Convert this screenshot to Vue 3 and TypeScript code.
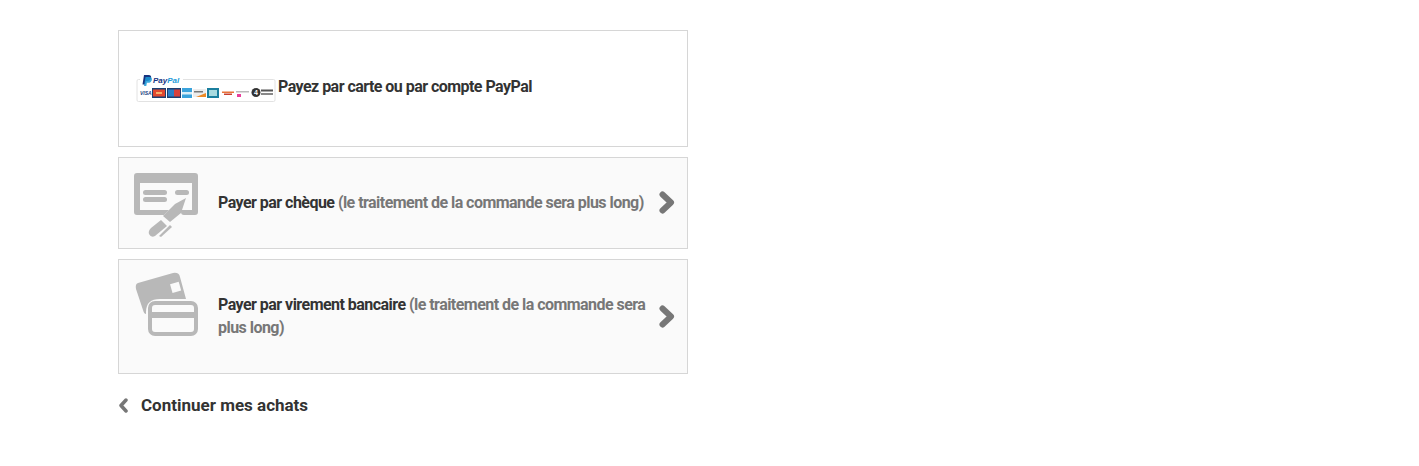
<script setup lang="ts">
const options = [
  { id: 'cheque', title: 'Payer par chèque', note: '(le traitement de la commande sera plus long)' },
  { id: 'virement', title: 'Payer par virement bancaire', note: '(le traitement de la commande sera plus long)' }
]
</script>

<template>
  <div class="payment">
    <a class="option paypal">
      <svg class="paypal-logo" width="140" height="30" viewBox="0 0 140 30">
        <path d="M4 5.500H2.500Q1 5.500 1 7V26Q1 27.500 2.500 27.500H137.500Q139 27.500 139 26V7Q139 5.500 137.500 5.500H47" fill="#fff" stroke="#e2e2e2" />
        <path d="M8 1h4.500c2.500 0 3 1.700 2.500 3.300-.5 1.800-2 2.700-3.800 2.700h-1.400l-.7 3.500H6.500z" fill="#17337f" />
        <path d="M9.500 3h4c2.200 0 2.800 1.500 2.300 3.200-.5 1.700-2 2.600-3.700 2.600h-1.200l-.6 3.200H8z" fill="#1c9bd8" opacity=".85" />
        <text x="17" y="9" class="pp-text">Pay<tspan fill="#1c9bd8">Pal</tspan></text>
        <text x="4" y="21" class="visa">VISA</text>
        <rect x="16" y="14" width="14" height="10" fill="#1c3f72" />
        <rect x="17" y="15.500" width="12" height="7" fill="#e2492f" />
        <rect x="20" y="18" width="6" height="2" fill="#f5b06a" />
        <rect x="31" y="14" width="14" height="10" fill="#1c3f72" />
        <rect x="32" y="15.500" width="6" height="7" fill="#2b7fc7" />
        <rect x="38" y="15.500" width="6" height="7" fill="#d9403a" />
        <rect x="46" y="14" width="10" height="10" fill="#3aa3dc" />
        <rect x="46" y="18" width="10" height="2.500" fill="#d7edf8" />
        <rect x="57" y="15" width="13" height="8" fill="#ececec" />
        <rect x="58" y="17" width="9" height="1.500" fill="#777" />
        <path d="M60 23 70 19V23z" fill="#ef8a25" />
        <rect x="71" y="14" width="12" height="10" fill="#1b7f9e" />
        <rect x="73" y="16" width="8" height="6" fill="#a9dbe0" />
        <rect x="86" y="17.500" width="12" height="1.500" fill="#e8743b" />
        <rect x="88" y="19.500" width="8" height="1.500" fill="#c9402f" />
        <rect x="100" y="17" width="13" height="1.500" fill="#bbb" />
        <rect x="101" y="20" width="4" height="3" fill="#e83e9b" />
        <circle cx="120" cy="18.500" r="4.500" fill="#333" />
        <text x="120" y="21" class="four">4</text>
        <rect x="125" y="15.500" width="12" height="2" fill="#555" />
        <rect x="125" y="19" width="12" height="2" fill="#888" />
      </svg>
      <span class="title">Payez par carte ou par compte PayPal</span>
    </a>

    <a v-for="o in options" :key="o.id" class="option alt" :class="o.id">
      <svg v-if="o.id === 'cheque'" class="icon" width="66" height="68" viewBox="0 0 66 68">
        <path d="M3 3h58a3 3 0 0 1 3 3v36a3 3 0 0 1-3 3H50q-3 0-3-3v-2h11V13H6v27h29l-5 5H3a3 3 0 0 1-3-3V6a3 3 0 0 1 3-3z" fill="#b8b8b8" />
        <rect x="9" y="20" width="24" height="5" rx="2.500" fill="#b8b8b8" />
        <rect x="9" y="27" width="24" height="5" rx="2.500" fill="#b8b8b8" />
        <rect x="41" y="20" width="14" height="5" rx="2.500" fill="#b8b8b8" />
        <path d="M52 28 47 43 36 52 29 46 41 34z" fill="#b8b8b8" />
        <path d="M27 50 33 56 21 66Q17 68 15 64 14 61 17 58z" fill="#b8b8b8" />
        <path d="M36 55 38 57 27 67 25 66z" fill="#b8b8b8" />
      </svg>
      <svg v-else class="icon" width="66" height="66" viewBox="0 0 66 66">
        <path d="M4 12 39 2Q45 1 46 6L52 28H26Q12 28 12 41V43Q10 43 9 39L2 18Q1 13 4 12z" fill="#b8b8b8" />
        <rect x="37" y="12" width="9" height="9" transform="rotate(-16 41 16)" fill="#fafafa" />
        <rect x="16" y="32" width="46" height="31" rx="5" fill="none" stroke="#b8b8b8" stroke-width="4" />
        <rect x="16" y="41" width="46" height="6" fill="#b8b8b8" />
      </svg>
      <span class="label"><span class="title">{{ o.title }}</span> <span class="note">{{ o.note }}</span></span>
      <svg class="chevron" width="16" height="23" viewBox="0 0 16 23">
        <path d="M3.500 3.500 12 11.500 3.500 19.500" fill="none" stroke="#777" stroke-width="6" stroke-linejoin="round" stroke-linecap="round" />
      </svg>
    </a>

    <a class="back">
      <svg width="10" height="15" viewBox="0 0 10 15">
        <path d="M8 2 3 7.500 8 13" fill="none" stroke="#777" stroke-width="3.500" stroke-linejoin="round" stroke-linecap="round" />
      </svg>
      <span>Continuer mes achats</span>
    </a>
  </div>
</template>

<style scoped>
.payment {
  width: 570px;
  margin-left: 118px;
  padding-top: 30px;
  font-family: Roboto, "Liberation Sans", sans-serif;
  font-size: 16px;
  line-height: 23px;
  font-weight: 700;
  color: #333;
}

.option {
  display: flex;
  align-items: center;
  box-sizing: border-box;
  border: 1px solid #d6d6d6;
  margin-bottom: 10px;
  letter-spacing: -0.54px;
}

.paypal {
  height: 117px;
  padding: 0 0 5px 17px;
  background: #fff;
}

.paypal-logo {
  margin: 6px 2px 0 0;
  flex: none;
}

.pp-text {
  font: italic 700 8px "Liberation Sans", sans-serif;
  letter-spacing: 0;
  fill: #17337f;
}

.visa {
  font: italic 700 5px "Liberation Sans", sans-serif;
  letter-spacing: 0;
  fill: #1d3f7f;
}

.four {
  font: 700 7px "Liberation Sans", sans-serif;
  letter-spacing: 0;
  fill: #fff;
  text-anchor: middle;
}

.alt {
  position: relative;
  padding: 0 40px 0 99px;
  background: #fafafa;
}

.cheque {
  height: 92px;
  padding-bottom: 2px;
}

.virement {
  height: 115px;
  padding-bottom: 1px;
}

.label {
  display: block;
}

.note {
  color: #777;
}

.icon {
  position: absolute;
  left: 15px;
  top: 12px;
}

.virement .icon {
  top: 11px;
}

.chevron {
  position: absolute;
  right: 12px;
  top: 33px;
}

.virement .chevron {
  top: 45px;
}

.back {
  display: flex;
  align-items: center;
  gap: 13px;
  margin-top: 19px;
  font-size: 17px;
  line-height: 24px;
  letter-spacing: 0;
}
</style>
